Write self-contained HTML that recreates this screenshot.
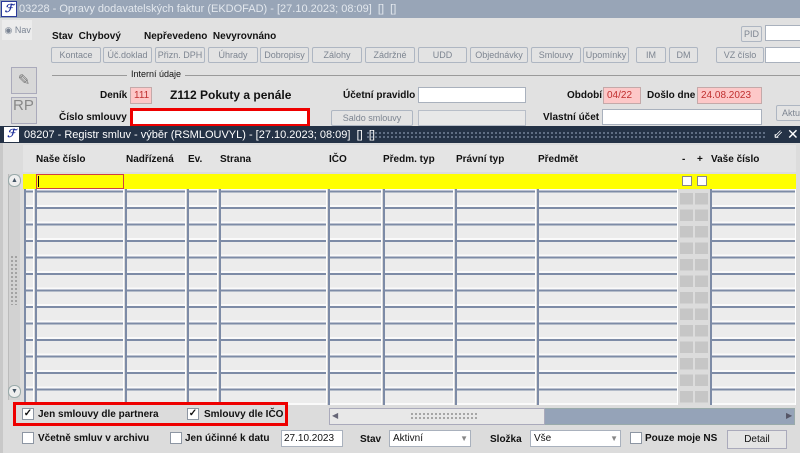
<!DOCTYPE html>
<html><head><meta charset="utf-8"><style>
*{box-sizing:border-box;margin:0;padding:0}
body{width:800px;height:453px;overflow:hidden;position:relative;background:#e1e1e1;font-family:"Liberation Sans",Arial,sans-serif;font-size:10px;color:#111}
.a{position:absolute;white-space:nowrap}
.b{font-weight:bold}
.btn{position:absolute;height:16px;border:1px solid #aeb6c2;background:#e3e3e3;color:#7d8591;font-size:9px;text-align:center;line-height:14px;border-radius:2px;overflow:hidden;white-space:nowrap}
.inp{position:absolute;height:16px;background:#fff;border:1px solid #a9b1bd}
.pink{position:absolute;height:17px;background:#fdc8c8;border:1px solid #c4a9a9;color:#c03030;font-size:10px;line-height:15px;padding-left:3px}
.col{position:absolute;top:174px;height:231px;background:repeating-linear-gradient(to bottom,#7d8ba6 0 2px,#ececec 2px 14.5px,#fafafa 14.5px 16.5px);border-left:2px solid #7d8ba6;border-right:1px solid #fff}
.hd{position:absolute;top:154px;font-weight:bold;font-size:10px}
.cb{position:absolute;width:12px;height:12px;background:#fff;border:1px solid #8d96a3}
.ck{position:absolute;width:12px;height:12px;background:#fff;border:1px solid #8d96a3;font-size:10px;line-height:10px;text-align:center;font-weight:bold}
.chk{position:absolute;top:174px;width:13px;height:231px;background:repeating-linear-gradient(to bottom,#dcdcdc 0 2.5px,#c6c6c6 2.5px 14px,#dcdcdc 14px 16.5px)}
</style></head><body>
<div class="a" style="left:0;top:0;width:800px;height:18px;background:#98a5b7"></div>
<div class="a" style="left:1px;top:1px;width:16px;height:16px;background:#fff;border:1px solid #2a3a9a;color:#1a2c9a;font-weight:bold;font-style:italic;font-size:11px;line-height:14px;text-align:center">ℱ</div>
<div class="a" style="left:19px;top:3px;color:#e3e8ee;font-size:11px">03228 - Opravy dodavatelských faktur (EKDOFAD) - [27.10.2023; 08:09] &nbsp;[] &nbsp;[]</div>
<div class="a" style="left:2px;top:20px;width:30px;height:20px;background:#ececec;color:#7a8493;font-size:9px;line-height:20px">&nbsp;◉ Nav</div>
<div class="a" style="left:11px;top:67px;width:26px;height:27px;border:1px solid #aab;background:#d8d8d8;text-align:center;font-size:15px;line-height:25px;color:#777">✎</div>
<div class="a" style="left:11px;top:97px;width:26px;height:27px;border:1px solid #aab;background:#d8d8d8;color:#888;font-size:15px;line-height:16px;padding-left:1px">RP</div>
<div class="a b" style="left:52px;top:31px">Stav &nbsp;Chybový</div>
<div class="a b" style="left:144px;top:31px">Nepřevedeno &nbsp;Nevyrovnáno</div>
<div class="btn" style="left:741px;top:26px;width:21px">PID</div>
<div class="inp" style="left:765px;top:25px;width:40px"></div>
<div class="btn" style="left:51px;top:47px;width:50px">Kontace</div>
<div class="btn" style="left:103px;top:47px;width:49px">Úč.doklad</div>
<div class="btn" style="left:155px;top:47px;width:50px">Přizn. DPH</div>
<div class="btn" style="left:208px;top:47px;width:50px">Úhrady</div>
<div class="btn" style="left:260px;top:47px;width:49px">Dobropisy</div>
<div class="btn" style="left:312px;top:47px;width:50px">Zálohy</div>
<div class="btn" style="left:365px;top:47px;width:50px">Zádržné</div>
<div class="btn" style="left:418px;top:47px;width:49px">UDD</div>
<div class="btn" style="left:470px;top:47px;width:58px">Objednávky</div>
<div class="btn" style="left:531px;top:47px;width:50px">Smlouvy</div>
<div class="btn" style="left:583px;top:47px;width:46px">Upomínky</div>
<div class="btn" style="left:636px;top:47px;width:30px">IM</div>
<div class="btn" style="left:669px;top:47px;width:29px">DM</div>
<div class="btn" style="left:716px;top:47px;width:48px">VZ číslo</div>
<div class="inp" style="left:765px;top:47px;width:40px"></div>
<div class="a" style="left:52px;top:75px;width:748px;height:1px;background:#9a9a9a"></div>
<div class="a" style="left:127px;top:69px;background:#e1e1e1;padding:0 4px;font-size:9px">Interní údaje</div>
<div class="a b" style="left:100px;top:90px">Deník</div>
<div class="pink" style="left:130px;top:87px;width:22px">111</div>
<div class="a b" style="left:170px;top:88px;font-size:12px">Z112 Pokuty a penále</div>
<div class="a b" style="left:343px;top:90px">Účetní pravidlo</div>
<div class="inp" style="left:418px;top:87px;width:108px"></div>
<div class="a b" style="left:567px;top:90px">Období</div>
<div class="pink" style="left:603px;top:87px;width:38px">04/22</div>
<div class="a b" style="left:647px;top:90px">Došlo dne</div>
<div class="pink" style="left:697px;top:87px;width:65px">24.08.2023</div>
<div class="a b" style="left:59px;top:112px">Číslo smlouvy</div>
<div class="a" style="left:130px;top:108px;width:180px;height:19px;border:3px solid #e00;background:#fff"></div>
<div class="btn" style="left:331px;top:110px;width:82px">Saldo smlouvy</div>
<div class="a" style="left:418px;top:110px;width:108px;height:16px;background:#e8e8e8;border:1px solid #b8bec8"></div>
<div class="a b" style="left:543px;top:112px">Vlastní účet</div>
<div class="inp" style="left:602px;top:109px;width:160px"></div>
<div class="btn" style="left:776px;top:105px;width:30px">Aktu</div>
<div class="a" style="left:0;top:126px;width:800px;height:327px;background:#dcdcdc;border-left:3px solid #c8c8c8"></div>
<div class="a" style="left:0;top:126px;width:800px;height:17px;background:#243246"></div>
<div class="a" style="left:4px;top:127px;width:15px;height:15px;background:#fff;color:#1a2c9a;font-weight:bold;font-style:italic;font-size:11px;line-height:14px;text-align:center">ℱ</div>
<div class="a" style="left:24px;top:129px;color:#fff;font-size:11px">08207 - Registr smluv - výběr (RSMLOUVYL) - [27.10.2023; 08:09] &nbsp;[] &nbsp;[]</div>
<div class="a" style="left:366px;top:131px;width:400px;height:7px;background:radial-gradient(circle,#6b7a90 0.8px,transparent 1.2px) 0 0/4px 4px"></div>
<div class="a" style="left:773px;top:127px;color:#fff;font-size:12px">⇙</div>
<div class="a" style="left:787px;top:126px;color:#fff;font-size:14px">✕</div>
<div class="a" style="left:23px;top:145px;width:773px;height:27px;background:#e4e4e4"></div>
<div class="hd" style="left:36px">Naše číslo</div>
<div class="hd" style="left:126px">Nadřízená</div>
<div class="hd" style="left:188px">Ev.</div>
<div class="hd" style="left:220px">Strana</div>
<div class="hd" style="left:329px">IČO</div>
<div class="hd" style="left:383px">Předm. typ</div>
<div class="hd" style="left:456px">Právní typ</div>
<div class="hd" style="left:538px">Předmět</div>
<div class="hd" style="left:682px">-</div>
<div class="hd" style="left:697px">+</div>
<div class="hd" style="left:711px">Vaše číslo</div>
<div class="col" style="left:24px;width:10px"></div>
<div class="col" style="left:35px;width:89px"></div>
<div class="col" style="left:125px;width:61px"></div>
<div class="col" style="left:187px;width:31px"></div>
<div class="col" style="left:219px;width:108px"></div>
<div class="col" style="left:328px;width:54px"></div>
<div class="col" style="left:383px;width:71px"></div>
<div class="col" style="left:455px;width:81px"></div>
<div class="col" style="left:537px;width:141px"></div>
<div class="chk" style="left:680px"></div>
<div class="chk" style="left:695px"></div>
<div class="col" style="left:710px;width:86px"></div>
<div class="a" style="left:23px;top:174px;width:773px;height:15px;background:#ffff00"></div>
<div class="a" style="left:36px;top:174px;width:88px;height:15px;border:1px solid #d04040;background:#ffff00"></div>
<div class="a" style="left:38px;top:176px;width:1px;height:11px;background:#000"></div>
<div class="a" style="left:682px;top:176px;width:10px;height:10px;background:#fff;border:1px solid #888"></div>
<div class="a" style="left:697px;top:176px;width:10px;height:10px;background:#fff;border:1px solid #888"></div>
<div class="a" style="left:8px;top:174px;width:12px;height:226px;background:#d2d2d2;border-left:1px solid #bbb"></div>
<div class="a" style="left:8px;top:174px;width:13px;height:13px;border:1px solid #9aa;border-radius:6px;background:#eee;font-size:7px;text-align:center;line-height:11px;color:#456">▲</div>
<div class="a" style="left:8px;top:385px;width:13px;height:13px;border:1px solid #9aa;border-radius:6px;background:#eee;font-size:7px;text-align:center;line-height:11px;color:#456">▼</div>
<div class="a" style="left:10px;top:255px;width:8px;height:50px;background:radial-gradient(circle,#999 0.8px,transparent 1.2px) 0 0/4px 4px"></div>
<div class="a" style="left:13px;top:402px;width:275px;height:24px;border:3px solid #e00"></div>
<div class="ck" style="left:22px;top:408px">✓</div>
<div class="a b" style="left:38px;top:409px">Jen smlouvy dle partnera</div>
<div class="ck" style="left:187px;top:408px">✓</div>
<div class="a b" style="left:204px;top:409px">Smlouvy dle IČO</div>
<div class="a" style="left:329px;top:408px;width:466px;height:17px;background:#95a3b8;border:1px solid #9aa"></div>
<div class="a" style="left:329px;top:408px;width:216px;height:17px;background:#e8e8e8;border:1px solid #aab"></div>
<div class="a" style="left:332px;top:411px;color:#667;font-size:8px">◀</div>
<div class="a" style="left:786px;top:411px;color:#556;font-size:8px">▶</div>
<div class="a" style="left:410px;top:412px;width:68px;height:8px;background:radial-gradient(circle,#999 0.8px,transparent 1.2px) 0 0/4px 4px"></div>
<div class="cb" style="left:22px;top:432px"></div>
<div class="a b" style="left:38px;top:433px">Včetně smluv v archivu</div>
<div class="cb" style="left:170px;top:432px"></div>
<div class="a b" style="left:185px;top:433px">Jen účinné k datu</div>
<div class="inp" style="left:281px;top:430px;width:62px;height:17px;font-size:10px;padding-left:2px;line-height:15px">27.10.2023</div>
<div class="a b" style="left:360px;top:434px">Stav</div>
<div class="inp" style="left:389px;top:430px;width:82px;height:17px;padding-left:3px;line-height:15px">Aktivní<span style="position:absolute;right:2px;top:0;color:#888;font-size:8px">▼</span></div>
<div class="a b" style="left:490px;top:434px">Složka</div>
<div class="inp" style="left:530px;top:430px;width:91px;height:17px;padding-left:3px;line-height:15px">Vše<span style="position:absolute;right:2px;top:0;color:#888;font-size:8px">▼</span></div>
<div class="cb" style="left:630px;top:432px"></div>
<div class="a b" style="left:645px;top:433px">Pouze moje NS</div>
<div class="a" style="left:727px;top:430px;width:60px;height:19px;border:1px solid #aab;background:#e4e4e4;text-align:center;line-height:17px;font-size:10px">Detail</div>
</body></html>
